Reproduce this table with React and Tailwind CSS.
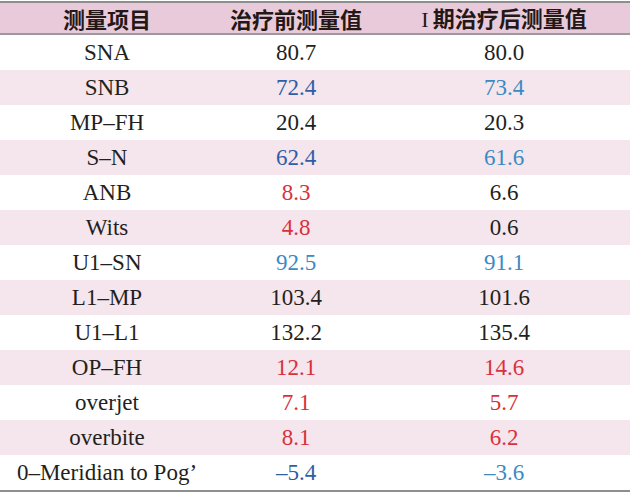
const ink = "text-[#231f20]";
const red = "text-[#d8313a]";
const navy = "text-[#2f5da6]";
const sky = "text-[#3b8ac2]";

const rows = [
  { name: "SNA", before: ["80.7", ink], after: ["80.0", ink] },
  { name: "SNB", before: ["72.4", navy], after: ["73.4", sky] },
  { name: "MP–FH", before: ["20.4", ink], after: ["20.3", ink] },
  { name: "S–N", before: ["62.4", navy], after: ["61.6", sky] },
  { name: "ANB", before: ["8.3", red], after: ["6.6", ink] },
  { name: "Wits", before: ["4.8", red], after: ["0.6", ink] },
  { name: "U1–SN", before: ["92.5", sky], after: ["91.1", sky] },
  { name: "L1–MP", before: ["103.4", ink], after: ["101.6", ink] },
  { name: "U1–L1", before: ["132.2", ink], after: ["135.4", ink] },
  { name: "OP–FH", before: ["12.1", red], after: ["14.6", red] },
  { name: "overjet", before: ["7.1", red], after: ["5.7", red] },
  { name: "overbite", before: ["8.1", red], after: ["6.2", red] },
  { name: "0–Meridian to Pog’", before: ["–5.4", navy], after: ["–3.6", sky] },
];

const cols = "grid grid-cols-[214px_164px_252px] items-center";
const serif = "font-['Liberation_Serif','DejaVu_Serif',serif]";

export default function App() {
  return (
    <div className="w-[630px] h-[494px] bg-white pt-px">
      <div className="border-t-2 border-b-2 border-[#8e8e8e]">
        {/* header */}
        <div
          className={`${cols} h-[32px] bg-[#e9cadb] border-b-2 border-[#9a9a9a] text-[22px] font-bold text-[#231815] text-center leading-none font-['Noto_Sans_CJK_SC','Noto_Sans',sans-serif]`}
        >
          <div>测量项目</div>
          <div>治疗前测量值</div>
          <div>
            <span className={`font-normal mr-1 ${serif}`}>I</span>
            期治疗后测量值
          </div>
        </div>

        {/* rows */}
        {rows.map((row, i) => (
          <div
            key={row.name}
            className={`${cols} h-[35px] text-center text-[23px] leading-none ${serif} ${i % 2 ? "bg-[#f5e5ed]" : "bg-white"}`}
          >
            <div className={ink}>{row.name}</div>
            <div className={row.before[1]}>{row.before[0]}</div>
            <div className={row.after[1]}>{row.after[0]}</div>
          </div>
        ))}
      </div>
    </div>
  );
}
